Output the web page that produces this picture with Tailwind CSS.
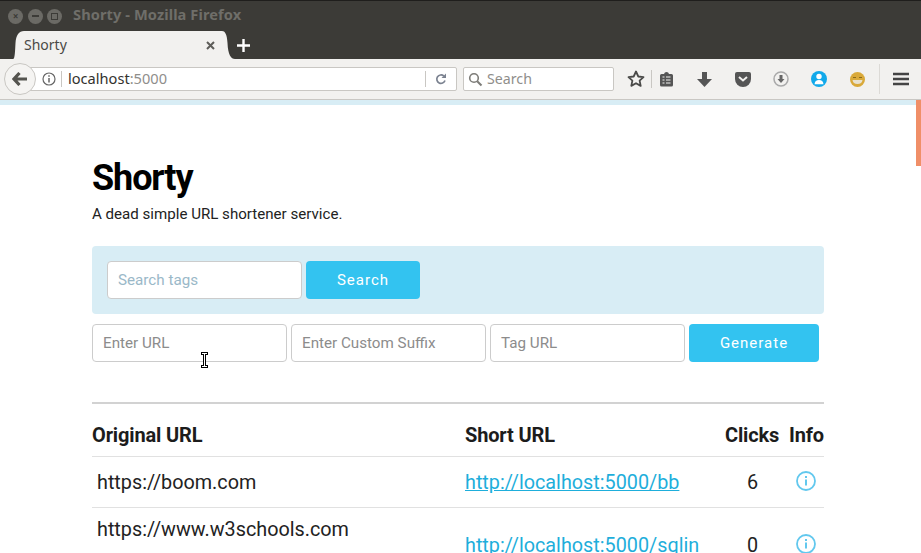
<!DOCTYPE html>
<html>
<head>
<meta charset="utf-8">
<script src="https://cdn.jsdelivr.net/npm/@tailwindcss/browser@4"></script>
</head>
<body class="w-[921px] h-[553px] overflow-hidden bg-white font-['Roboto',sans-serif] text-[#111]">
<div class="h-[31px] bg-[#3c3b37] border-t border-[#1f1e1c] flex items-center pl-[8px] gap-[4px] font-['Noto_Sans','Open_Sans',sans-serif]">
  <span class="w-[15px] h-[15px] rounded-full bg-[#6b6a65] flex items-center justify-center text-[#3c3b37] text-[10px] leading-none font-bold">×</span>
  <span class="w-[15px] h-[15px] rounded-full bg-[#6b6a65] ml-[1px] flex items-center justify-center"><span class="w-[7px] h-[2px] bg-[#3c3b37]"></span></span>
  <span class="w-[15px] h-[15px] rounded-full bg-[#6b6a65] flex items-center justify-center"><span class="w-[7px] h-[7px] border border-[#3c3b37]"></span></span>
  <span class="ml-[7px] mb-[3px] text-[14.600px] font-bold text-[#6f6e69] tracking-[0.100px]">Shorty - Mozilla Firefox</span>
</div>
<div class="h-[28px] bg-[#3c3b37] flex items-end pl-[13px] font-['Noto_Sans','Open_Sans',sans-serif]">
  <svg width="11" height="28" viewBox="0 0 11 28"><path d="M0 28C2 28 2 20 2.500 12C3 4 6 0 11 0V28z" fill="#f2f1ef"/></svg>
  <div class="w-[198px] h-[28px] bg-[#f2f1ef] flex items-center pr-[7px] pb-[2px] justify-between text-[14px] text-[#4a4945]">
    <span>Shorty</span>
    <svg class="mt-[2px]" width="9" height="9" viewBox="0 0 9 9"><path d="M1 1l7 7M8 1l-7 7" stroke="#5e5d59" stroke-width="2"/></svg>
  </div>
  <svg width="13" height="28" viewBox="0 0 13 28"><path d="M0 0C3 0 5 3 5.500 12C6 24 9 28 13 28H0z" fill="#f2f1ef"/></svg>
  <svg class="ml-[2px] mb-[7px]" width="13" height="13" viewBox="0 0 13 13"><path d="M6.500 0v13M0 6.500h13" stroke="#fff" stroke-width="2.400"/></svg>
</div>
<div class="h-[41px] bg-[#f2f1ef] border-b border-[#c9c7c3] flex items-center relative font-['Noto_Sans','Open_Sans',sans-serif]">
  <div class="absolute left-[4px] top-[4px] w-[32px] h-[32px] rounded-full bg-[#f5f4f2] border border-[#c9c7c3] flex items-center justify-center z-10">
    <svg width="16" height="14" viewBox="0 0 16 14"><path d="M7.500 1L2 7l5.500 6M2.500 7H15" fill="none" stroke="#55544f" stroke-width="3.200"/></svg>
  </div>
  <div class="ml-[20px] w-[437px] h-[24px] bg-white border border-[#c9c7c3] rounded-[2px] flex items-center pl-[21px] pr-[9px]">
    <svg width="14" height="14" viewBox="0 0 14 14"><circle cx="7" cy="7" r="6" fill="none" stroke="#666" stroke-width="1.200"/><path d="M7 6v4.500M7 3.200v1.600" stroke="#666" stroke-width="1.500"/></svg>
    <span class="ml-[5px] w-px h-[16px] bg-[#c9c7c3]"></span>
    <span class="ml-[6px] text-[14.600px] text-[#33322e]">localhost<span class="text-[#8f8e8b]">:5000</span></span>
    <span class="ml-auto w-px h-[16px] bg-[#c9c7c3]"></span>
    <svg class="ml-[9px]" width="12" height="12" viewBox="0 0 12 12"><path d="M10 7.500A4.200 4.200 0 1 1 8.800 3" fill="none" stroke="#7b8290" stroke-width="1.700"/><path d="M11 0.500v4.500H6.500z" fill="#7b8290"/></svg>
  </div>
  <div class="ml-[6px] w-[151px] h-[24px] bg-white border border-[#c9c7c3] rounded-[2px] flex items-center pl-[4px]">
    <svg width="15" height="15" viewBox="0 0 15 15"><circle cx="6" cy="6" r="4.300" fill="none" stroke="#7d7c78" stroke-width="1.600"/><path d="M9.200 9.200L13.500 13.500" stroke="#7d7c78" stroke-width="2"/></svg>
    <span class="ml-[4px] text-[14.200px] text-[#8f8e8b]">Search</span>
  </div>
  <svg class="ml-[13px]" width="18" height="18" viewBox="0 0 18 18"><path d="M9 1.500l2.300 5 5.200.6-3.900 3.500 1.100 5.300L9 13.200l-4.700 2.700 1.100-5.300-3.900-3.500 5.200-.6z" fill="none" stroke="#4a4a48" stroke-width="1.800" stroke-linejoin="round"/></svg>
  <span class="ml-[6px] w-px h-[18px] bg-[#c9c7c3]"></span>
  <svg class="ml-[7px]" width="15" height="16" viewBox="0 0 15 16"><path d="M1 4.500Q1 3 2.500 3H5Q5.500 1 7.500 1T10 3h2.500Q14 3 14 4.500V14q0 1.500-1.500 1.500h-10Q1 15.500 1 14z" fill="#555"/><path d="M3.500 6h2M7 6h4.500M3.500 9h2M7 9h4.500M3.500 12h2M7 12h4.500" stroke="#f2f1ef" stroke-width="1.200"/></svg>
  <svg class="ml-[23px]" width="15" height="15" viewBox="0 0 15 15"><path d="M5 0h5v7h5l-7.500 8L0 7h5z" fill="#555"/></svg>
  <svg class="ml-[23px]" width="16" height="15" viewBox="0 0 16 15"><path d="M0 2Q0 0 2 0h12q2 0 2 2v5a8 8 0 0 1-16 0z" fill="#555"/><path d="M4 5l4 3.500L12 5" fill="none" stroke="#f2f1ef" stroke-width="2"/></svg>
  <svg class="ml-[22px]" width="16" height="16" viewBox="0 0 16 16"><circle cx="8" cy="8" r="7" fill="none" stroke="#aaa" stroke-width="1.500"/><path d="M6.500 4h3v4h2L8 12 4.500 8h2z" fill="#666"/></svg>
  <svg class="ml-[22px]" width="16" height="16" viewBox="0 0 16 16"><circle cx="8" cy="8" r="8" fill="#12a9ea"/><circle cx="8" cy="5.500" r="2.700" fill="#fff"/><path d="M3.500 13.200Q4 9 8 9t4.500 4.200z" fill="#fff"/></svg>
  <svg class="ml-[23px]" width="15" height="15" viewBox="0 0 15 15"><circle cx="7.500" cy="7.500" r="7.500" fill="#d9a93a"/><path d="M2.500 8h10q-.5 4-5 4t-5-4z" fill="#e8e2d0"/><path d="M3 5.500h3M9 5.500h3" stroke="#8a6a1a" stroke-width="1.200"/></svg>
  <span class="ml-[14px] w-px h-[30px] bg-[#dcdad6]"></span>
  <svg class="ml-[13px]" width="16" height="14" viewBox="0 0 16 14"><path d="M0 2h16M0 7h16M0 12h16" stroke="#444" stroke-width="2.400"/></svg>
</div>
<div class="relative h-[453px] overflow-hidden">
  <div class="h-[5px] bg-[#d8edf5]"></div>
  <div class="absolute right-0 top-0 w-[5px] h-[66px] bg-[#f08f68]"></div>
  <main class="w-[732px] ml-[92px] pt-[52px]">
    <h1 class="text-[36px] leading-[42px] font-bold text-black tracking-[-1.100px]">Shorty</h1>
    <p class="mt-[5px] text-[15.100px] leading-[20px] text-[#222]">A dead simple URL shortener service.</p>
    <form class="mt-[22px] h-[68px] bg-[#d8edf5] rounded-[4px] flex items-center pl-[15px] gap-[4px]">
      <div class="w-[195px] h-[38px] bg-white border border-[#ccc] rounded-[4px] flex items-center pl-[10px] text-[15.200px] text-[#9ab8c8]">Search tags</div>
      <div class="w-[114px] h-[38px] bg-[#33c3f0] rounded-[4px] flex items-center justify-center text-white text-[15px] tracking-[1px]">Search</div>
    </form>
    <div class="mt-[10px] flex gap-[4px]">
      <div class="w-[195px] h-[38px] bg-white border border-[#ccc] rounded-[4px] flex items-center pl-[10px] text-[15.200px] text-[#8c8c8c] relative">Enter URL
        <svg class="absolute left-[107px] top-[27px]" width="9" height="16" viewBox="0 0 9 16"><path d="M1 1.500h7M1 14.500h7M4.500 1.500v13" stroke="#000" stroke-width="3"/><path d="M2 1.500h5M2 14.500h5M4.500 1.500v13" stroke="#fff" stroke-width="1"/></svg>
      </div>
      <div class="w-[195px] h-[38px] bg-white border border-[#ccc] rounded-[4px] flex items-center pl-[10px] text-[15.200px] text-[#8c8c8c]">Enter Custom Suffix</div>
      <div class="w-[195px] h-[38px] bg-white border border-[#ccc] rounded-[4px] flex items-center pl-[10px] text-[15.200px] text-[#8c8c8c]">Tag URL</div>
      <div class="w-[130px] h-[38px] bg-[#33c3f0] rounded-[4px] flex items-center justify-center text-white text-[15px] tracking-[1px]">Generate</div>
    </div>
    <div class="mt-[40px] h-[2px] bg-[#d2d2d2]"></div>
    <div class="h-[53px] pt-[10px] border-b border-[#e1e1e1] flex items-center text-[20px] font-bold text-[#1c1c1c] tracking-[-0.150px]">
      <span class="w-[373px]">Original URL</span>
      <span class="w-[260px]">Short URL</span>
      <span class="w-[64px]">Clicks</span>
      <span>Info</span>
    </div>
    <div class="h-[51px] pt-[2px] border-b border-[#e1e1e1] flex items-center text-[19.800px] text-[#222]">
      <span class="w-[373px] pl-[5px]">https://boom.com</span>
      <a class="w-[260px] text-[#1eaedb] underline">http://localhost:5000/bb</a>
      <span class="w-[54px] pl-[22px]">6</span>
      <span class="ml-[10px] pl-[7px] mb-[4px]"><svg width="20" height="20" viewBox="0 0 20 20"><circle cx="10" cy="10" r="9" fill="none" stroke="#62c8ee" stroke-width="1.800"/><path d="M10 8.500v6M10 5v2" stroke="#62c8ee" stroke-width="2"/></svg></span>
    </div>
    <div class="h-[74px] flex items-start text-[19.800px] text-[#222]">
      <span class="w-[373px] pl-[5px] pt-[7px]">https://www.w3schools.com</span>
      <a class="w-[260px] text-[#1eaedb] underline pt-[23px]">http://localhost:5000/sqlin</a>
      <span class="w-[54px] pl-[22px] pt-[23px]">0</span>
      <span class="ml-[10px] pl-[7px] pt-[26px]"><svg width="20" height="20" viewBox="0 0 20 20"><circle cx="10" cy="10" r="9" fill="none" stroke="#62c8ee" stroke-width="1.800"/><path d="M10 8.500v6M10 5v2" stroke="#62c8ee" stroke-width="2"/></svg></span>
    </div>
  </main>
</div>
</body>
</html>
